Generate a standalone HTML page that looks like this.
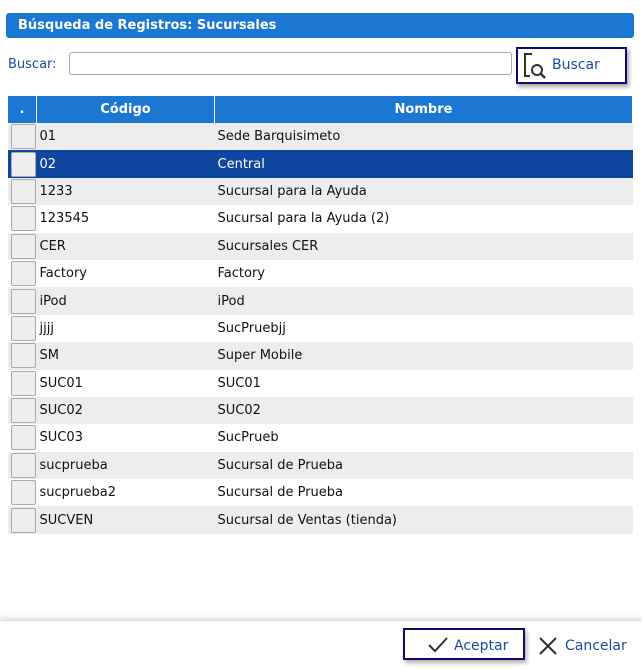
<!DOCTYPE html>
<html><head><meta charset="utf-8"><style>
body{margin:0;width:642px;height:668px;background:#fff;font-family:"DejaVu Sans","Liberation Sans",sans-serif;font-size:13px;position:relative;overflow:hidden}
.hdr{position:absolute;left:6px;top:13px;width:628px;height:25px;background:#1b77d2;border-radius:3px;color:#fff;font-weight:bold;font-size:13px;line-height:26px;padding-left:12px;box-sizing:border-box}
.lbl{position:absolute;left:8px;top:57px;color:#1a4ba0;font-size:13px}
.inp{position:absolute;left:69px;top:52px;width:443px;height:23px;border:1px solid #aaa;border-radius:3px;box-sizing:border-box}
.bbtn{position:absolute;left:516px;top:47px;width:111px;height:37px;border:2px solid #0a0a70;box-sizing:border-box;box-shadow:2px 3px 4px rgba(0,0,0,.35);color:#1a4ba0;font-size:14px}
table{position:absolute;left:8px;top:96px;width:625px;border-collapse:collapse}
th{background:#1b77d2;color:#fff;height:27px;font-weight:bold;font-size:13px;border-right:1px solid #fff;padding:0}
td{height:27.4px;padding:0 0 0 3px;font-size:13px;color:#111;box-sizing:border-box}
tr{height:27.4px}
tr.g td{background:#ededed}
tr.s td{background:#0f47a0;color:#fff}
.cb{width:25px;height:25px;border:1px solid #aaa;border-radius:2px;background:#eee;box-sizing:border-box;margin-left:0}
.foot{position:absolute;left:0;top:620px;width:642px;height:48px;border-top:1px solid #ddd;box-shadow:0 -3px 4px rgba(0,0,0,.1)}
.acc{position:absolute;left:403px;top:628px;width:122px;height:32px;border:2px solid #0a0a70;box-sizing:border-box;box-shadow:2px 3px 4px rgba(0,0,0,.3);color:#1a4ba0;font-size:14px}
</style></head><body>
<div class="hdr">Búsqueda de Registros: Sucursales</div>
<div class="lbl">Buscar:</div>
<div class="inp"></div>
<div class="bbtn">
<svg style="position:absolute;left:5px;top:4px" width="24" height="26" viewBox="0 0 24 26"><path d="M9 1H2v22h5" fill="none" stroke="#333" stroke-width="2"/><circle cx="14" cy="17" r="5" fill="none" stroke="#333" stroke-width="2"/><path d="M18 21l4 4" stroke="#333" stroke-width="2.5"/></svg>
<span style="position:absolute;left:34px;top:8px">Buscar</span></div>
<table>
<tr style="height:27px"><th style="width:28px">.</th><th style="width:177px">Código</th><th>Nombre</th></tr>
<tr class="g"><td><div class="cb"></div></td><td>01</td><td>Sede Barquisimeto</td></tr>
<tr class="s"><td><div class="cb"></div></td><td>02</td><td>Central</td></tr>
<tr class="g"><td><div class="cb"></div></td><td>1233</td><td>Sucursal para la Ayuda</td></tr>
<tr><td><div class="cb"></div></td><td>123545</td><td>Sucursal para la Ayuda (2)</td></tr>
<tr class="g"><td><div class="cb"></div></td><td>CER</td><td>Sucursales CER</td></tr>
<tr><td><div class="cb"></div></td><td>Factory</td><td>Factory</td></tr>
<tr class="g"><td><div class="cb"></div></td><td>iPod</td><td>iPod</td></tr>
<tr><td><div class="cb"></div></td><td>jjjj</td><td>SucPruebjj</td></tr>
<tr class="g"><td><div class="cb"></div></td><td>SM</td><td>Super Mobile</td></tr>
<tr><td><div class="cb"></div></td><td>SUC01</td><td>SUC01</td></tr>
<tr class="g"><td><div class="cb"></div></td><td>SUC02</td><td>SUC02</td></tr>
<tr><td><div class="cb"></div></td><td>SUC03</td><td>SucPrueb</td></tr>
<tr class="g"><td><div class="cb"></div></td><td>sucprueba</td><td>Sucursal de Prueba</td></tr>
<tr><td><div class="cb"></div></td><td>sucprueba2</td><td>Sucursal de Prueba</td></tr>
<tr class="g"><td><div class="cb"></div></td><td>SUCVEN</td><td>Sucursal de Ventas (tienda)</td></tr>
</table>
<div class="foot"></div>
<div class="acc">
<svg style="position:absolute;left:22px;top:5px" width="22" height="20" viewBox="0 0 22 20"><path d="M2 10l6 6L20 3" fill="none" stroke="#333" stroke-width="2"/></svg>
<span style="position:absolute;left:49px;top:8px">Aceptar</span></div>
<svg style="position:absolute;left:538px;top:636px" width="20" height="20" viewBox="0 0 20 20"><path d="M2 2l16 16M18 2L2 18" stroke="#333" stroke-width="2"/></svg>
<div style="position:absolute;left:565px;top:638px;color:#1a4ba0;font-size:14px">Cancelar</div>
</body></html>
